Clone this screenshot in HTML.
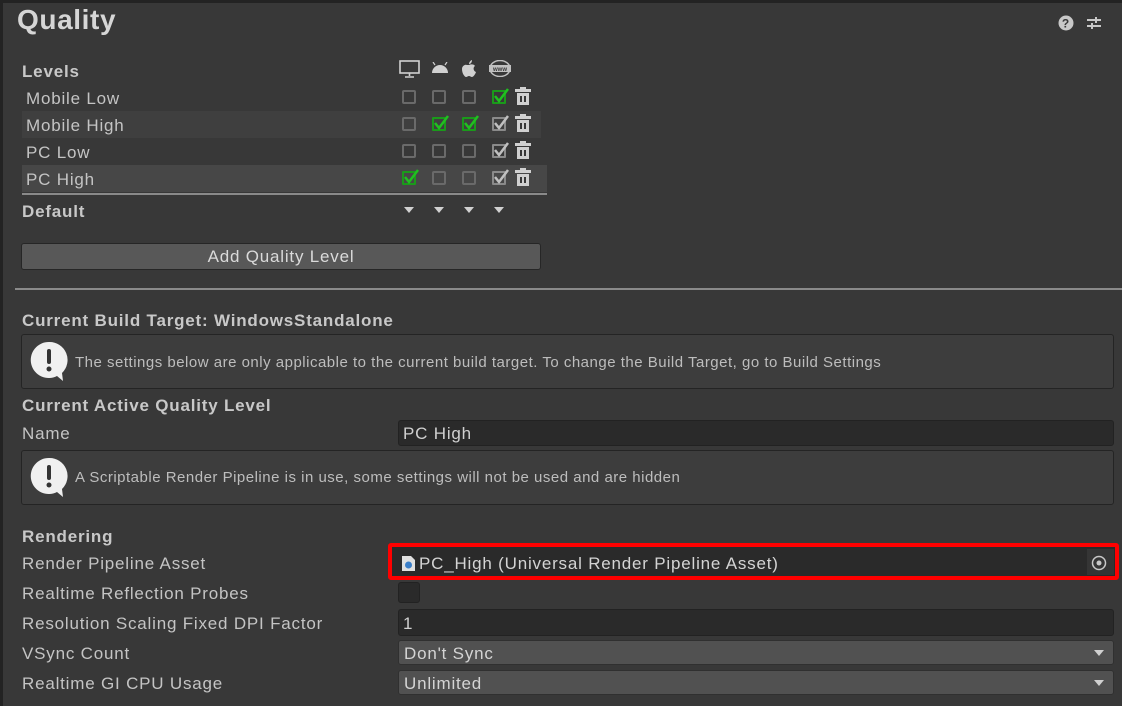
<!DOCTYPE html>
<html><head><meta charset="utf-8"><style>
*{margin:0;padding:0;box-sizing:border-box}
body{width:1122px;height:706px;background:#383838;font-family:"Liberation Sans",sans-serif;color:#c4c4c4;position:relative;overflow:hidden;font-size:17px;letter-spacing:0.8px}
.a{position:absolute;white-space:nowrap}
.t{margin-top:1px}
.b{font-weight:bold;color:#c8c8c8}
.cb{position:absolute;width:14px;height:14px;border:2px solid #6a6a6a;border-radius:2px;background:#383838}
.ck{position:absolute;width:14px;height:14px;border:2px solid #1a9a1a;border-radius:1px}
.ck.g{border-color:#8a8a8a}
.ck svg{position:absolute;left:-2px;top:-6px}
.fld{position:absolute;background:#2a2a2a;border:1px solid #222;border-radius:3px}
.dd{position:absolute;background:#515151;border:1px solid #303030;border-radius:3px}
.help{position:absolute;left:21px;width:1093px;background:#3d3d3d;border:1px solid #242424;border-radius:3px}
.tri{position:absolute;width:0;height:0;border-left:5px solid transparent;border-right:5px solid transparent;border-top:6px solid #d0d0d0}
</style></head><body>
<div class="a" style="left:0;top:0;width:1122px;height:3px;background:#232323"></div>
<div class="a" style="left:0;top:0;width:3px;height:706px;background:#232323"></div>
<div class="a b" style="left:17px;top:4px;font-size:28px;color:#d6d6d6;letter-spacing:0.6px">Quality</div>
<svg class="a" style="left:1058px;top:15px" width="16" height="16"><circle cx="8" cy="8" r="7.5" fill="#c8c8c8"/><text x="8" y="12.5" font-size="12" font-weight="bold" text-anchor="middle" fill="#383838" font-family="Liberation Sans">?</text></svg>
<svg class="a" style="left:1086px;top:15px" width="16" height="16" stroke="#c8c8c8" stroke-width="2"><path d="M1 5h14M1 11h14M10 2v6M6 8v6"/></svg>
<div class="a b t" style="left:22px;top:61px">Levels</div>
<svg class="a" style="left:399px;top:60px" width="22" height="18" fill="none" stroke="#d0d0d0" stroke-width="1.6"><rect x="1" y="1" width="19" height="12"/><path d="M10.5 13v3M6 17h9"/></svg>
<svg class="a" style="left:431px;top:62px" width="18" height="12" fill="#d0d0d0"><path d="M1 11a8 8 0 0 1 16 0z"/><path d="M4 3L2 0M14 3l2-3" stroke="#d0d0d0" stroke-width="1.2"/></svg>
<svg class="a" style="left:461px;top:59px" width="16" height="19" fill="#d0d0d0"><path d="M8 6c2-1 5-1 6 1-2 1-2 5 1 6-1 3-3 5-4 5s-2-1-3-1-2 1-3 1-4-3-4-8c0-3 3-5 5-4z"/><path d="M8 5c0-2 2-4 3-4 0 2-1 4-3 4z"/></svg>
<svg class="a" style="left:488px;top:60px" width="24" height="17"><ellipse cx="12" cy="8.5" rx="10" ry="8" fill="none" stroke="#c0c0c0" stroke-width="1.5"/><rect x="1" y="5" width="22" height="7" fill="#c0c0c0"/><text x="12" y="11" font-size="6" font-weight="bold" text-anchor="middle" fill="#383838" font-family="Liberation Sans" letter-spacing="0">www</text></svg>
<div class="a" style="left:22px;top:111px;width:519px;height:27px;background:#3f3f3f"></div>
<div class="a" style="left:22px;top:165px;width:525px;height:27px;background:#474747"></div>
<div class="a" style="left:22px;top:193px;width:525px;height:2px;background:#8a8a8a"></div>
<div class="a t" style="left:26px;top:88px">Mobile Low</div>
<div class="a t" style="left:26px;top:115px">Mobile High</div>
<div class="a t" style="left:26px;top:142px">PC Low</div>
<div class="a t" style="left:26px;top:169px">PC High</div>
<div class="cb" style="left:402px;top:90px"></div><div class="cb" style="left:432px;top:90px"></div><div class="cb" style="left:462px;top:90px"></div>
<div class="ck" style="left:492px;top:90px"><svg width="20" height="20"><path d="M3 10l4 5 9-12" fill="none" stroke="#20c020" stroke-width="2.5"/></svg></div>
<div class="cb" style="left:402px;top:117px;background:#3f3f3f"></div>
<div class="ck" style="left:432px;top:117px"><svg width="20" height="20"><path d="M3 10l4 5 9-12" fill="none" stroke="#20c020" stroke-width="2.5"/></svg></div>
<div class="ck" style="left:462px;top:117px"><svg width="20" height="20"><path d="M3 10l4 5 9-12" fill="none" stroke="#20c020" stroke-width="2.5"/></svg></div>
<div class="ck g" style="left:492px;top:117px"><svg width="20" height="20"><path d="M3 10l4 5 9-12" fill="none" stroke="#c0c0c0" stroke-width="2.5"/></svg></div>
<div class="cb" style="left:402px;top:144px"></div><div class="cb" style="left:432px;top:144px"></div><div class="cb" style="left:462px;top:144px"></div>
<div class="ck g" style="left:492px;top:144px"><svg width="20" height="20"><path d="M3 10l4 5 9-12" fill="none" stroke="#c0c0c0" stroke-width="2.5"/></svg></div>
<div class="ck" style="left:402px;top:171px"><svg width="20" height="20"><path d="M3 10l4 5 9-12" fill="none" stroke="#20c020" stroke-width="2.5"/></svg></div>
<div class="cb" style="left:432px;top:171px;background:#474747"></div><div class="cb" style="left:462px;top:171px;background:#474747"></div>
<div class="ck g" style="left:492px;top:171px"><svg width="20" height="20"><path d="M3 10l4 5 9-12" fill="none" stroke="#c0c0c0" stroke-width="2.5"/></svg></div>
<svg class="a" style="left:515px;top:87px" width="16" height="19"><rect x="0" y="2" width="16" height="3" fill="#d0d0d0"/><rect x="5" y="0" width="6" height="3" fill="#d0d0d0"/><rect x="2" y="6" width="12" height="12" fill="#d0d0d0"/><rect x="5" y="9" width="2" height="6" fill="#383838"/><rect x="9" y="9" width="2" height="6" fill="#383838"/></svg>
<svg class="a" style="left:515px;top:114px" width="16" height="19"><rect x="0" y="2" width="16" height="3" fill="#d0d0d0"/><rect x="5" y="0" width="6" height="3" fill="#d0d0d0"/><rect x="2" y="6" width="12" height="12" fill="#d0d0d0"/><rect x="5" y="9" width="2" height="6" fill="#383838"/><rect x="9" y="9" width="2" height="6" fill="#383838"/></svg>
<svg class="a" style="left:515px;top:141px" width="16" height="19"><rect x="0" y="2" width="16" height="3" fill="#d0d0d0"/><rect x="5" y="0" width="6" height="3" fill="#d0d0d0"/><rect x="2" y="6" width="12" height="12" fill="#d0d0d0"/><rect x="5" y="9" width="2" height="6" fill="#383838"/><rect x="9" y="9" width="2" height="6" fill="#383838"/></svg>
<svg class="a" style="left:515px;top:168px" width="16" height="19"><rect x="0" y="2" width="16" height="3" fill="#d0d0d0"/><rect x="5" y="0" width="6" height="3" fill="#d0d0d0"/><rect x="2" y="6" width="12" height="12" fill="#d0d0d0"/><rect x="5" y="9" width="2" height="6" fill="#383838"/><rect x="9" y="9" width="2" height="6" fill="#383838"/></svg>
<div class="a b t" style="left:22px;top:201px">Default</div>
<div class="tri" style="left:404px;top:207px"></div><div class="tri" style="left:434px;top:207px"></div><div class="tri" style="left:464px;top:207px"></div><div class="tri" style="left:494px;top:207px"></div>
<div class="a" style="left:21px;top:243px;width:520px;height:27px;background:#585858;border:1px solid #262626;border-radius:3px;text-align:center;line-height:26px;color:#dadada">Add Quality Level</div>
<div class="a" style="left:15px;top:288px;width:1107px;height:2px;background:#8a8a8a"></div>
<div class="a b t" style="left:22px;top:310px">Current Build Target: WindowsStandalone</div>
<div class="help" style="top:334px;height:55px"></div>
<svg class="a" style="left:28px;top:340px" width="42" height="42"><path d="M21 2a18 18 0 1 0 8 34l6 5-1-8A18 18 0 0 0 21 2z" fill="#f0f0f0"/><rect x="19" y="9" width="4" height="15" rx="2" fill="#333"/><circle cx="21" cy="29" r="2.5" fill="#333"/></svg>
<div class="a t" style="left:75px;top:353px;font-size:15px;color:#bdbdbd;letter-spacing:0.5px">The settings below are only applicable to the current build target. To change the Build Target, go to Build Settings</div>
<div class="a b t" style="left:22px;top:395px">Current Active Quality Level</div>
<div class="a t" style="left:22px;top:423px">Name</div>
<div class="fld" style="left:398px;top:420px;width:716px;height:26px"></div>
<div class="a t" style="left:403px;top:423px;color:#d0d0d0">PC High</div>
<div class="help" style="top:450px;height:55px"></div>
<svg class="a" style="left:28px;top:456px" width="42" height="42"><path d="M21 2a18 18 0 1 0 8 34l6 5-1-8A18 18 0 0 0 21 2z" fill="#f0f0f0"/><rect x="19" y="9" width="4" height="15" rx="2" fill="#333"/><circle cx="21" cy="29" r="2.5" fill="#333"/></svg>
<div class="a t" style="left:75px;top:468px;font-size:15px;color:#bdbdbd;letter-spacing:0.5px">A Scriptable Render Pipeline is in use, some settings will not be used and are hidden</div>
<div class="a b t" style="left:22px;top:526px">Rendering</div>
<div class="a t" style="left:22px;top:553px">Render Pipeline Asset</div>
<div class="a t" style="left:22px;top:583px">Realtime Reflection Probes</div>
<div class="a t" style="left:22px;top:613px">Resolution Scaling Fixed DPI Factor</div>
<div class="a t" style="left:22px;top:643px">VSync Count</div>
<div class="a t" style="left:22px;top:673px">Realtime GI CPU Usage</div>
<div class="a" style="left:388px;top:543px;width:731px;height:37px;border:4px solid #f00;border-radius:3px"></div>
<div class="a" style="left:392px;top:547px;width:723px;height:29px;background:#2a2a2a"></div>
<div class="a" style="left:1087px;top:549px;width:27px;height:26px;background:#353535"></div>
<svg class="a" style="left:1091px;top:555px" width="16" height="16"><circle cx="8" cy="8" r="6.5" fill="none" stroke="#c8c8c8" stroke-width="1.5"/><circle cx="8" cy="8" r="2.5" fill="#c8c8c8"/></svg>
<svg class="a" style="left:402px;top:556px" width="13" height="15"><path d="M0 0h9l4 4v11H0z" fill="#e0e0e0"/><circle cx="6.5" cy="9" r="3.5" fill="#3a7ec8"/></svg>
<div class="a t" style="left:419px;top:553px;color:#d4d4d4">PC_High (Universal Render Pipeline Asset)</div>
<div class="a" style="left:398px;top:582px;width:22px;height:21px;background:#2a2a2a;border:1px solid #222;border-radius:3px"></div>
<div class="fld" style="left:398px;top:609px;width:716px;height:27px"></div>
<div class="a t" style="left:403px;top:613px;color:#d0d0d0">1</div>
<div class="dd" style="left:398px;top:640px;width:716px;height:25px"></div>
<div class="a t" style="left:404px;top:643px;color:#d4d4d4">Don't Sync</div>
<div class="tri" style="left:1094px;top:650px"></div>
<div class="dd" style="left:398px;top:670px;width:716px;height:25px"></div>
<div class="a t" style="left:404px;top:673px;color:#d4d4d4">Unlimited</div>
<div class="tri" style="left:1094px;top:680px"></div>
</body></html>
